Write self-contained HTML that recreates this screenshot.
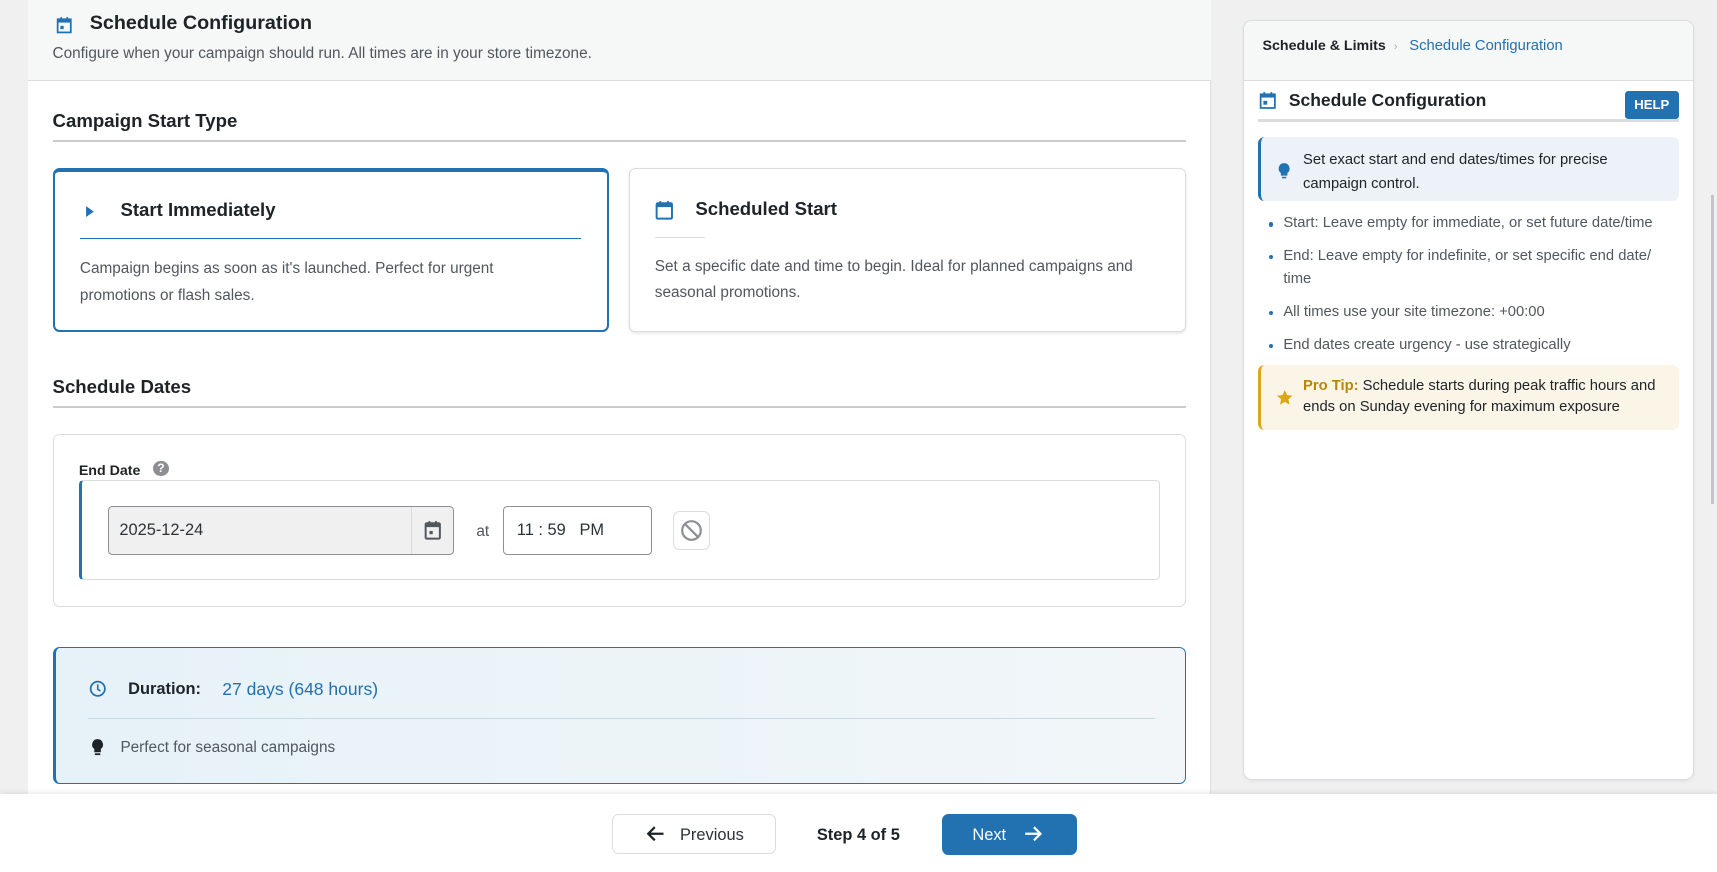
<!DOCTYPE html>
<html><head><meta charset="utf-8"><style>
html{zoom:1.095}
*{box-sizing:border-box;margin:0;padding:0}
body{width:1568px;height:796px;overflow:hidden;background:#f0f0f1;font-family:"Liberation Sans",sans-serif;color:#1d2327;position:relative}
.abs{position:absolute}
.main{left:26px;top:-2px;width:1080px;height:740px;background:#fff;border-right:1px solid #ddd}
.mh{left:0;top:0;width:1080px;height:76px;background:#f6f7f7;border-bottom:1px solid #dcdcde}
.t{white-space:nowrap}
.gray{color:#50575e}
.blue{color:#2271b1}
.card{border-radius:6px;background:#fff}
.li{position:relative;margin-bottom:9px}
.li:before{content:"";position:absolute;left:-13px;top:9px;width:4px;height:4px;border-radius:50%;background:#2271b1}
</style></head><body>
<div class="abs main">
  <div class="abs mh"></div>
</div>
<svg class="abs" style="left:51px;top:15px" width="15" height="16" viewBox="0 0 15 16"><rect x="1.5" y="3" width="12" height="12" fill="none" stroke="#2271b1" stroke-width="1.6"/><rect x="1.5" y="3" width="12" height="3" fill="#2271b1"/><rect x="4" y="1" width="1.6" height="3" fill="#2271b1"/><rect x="9.5" y="1" width="1.6" height="3" fill="#2271b1"/><rect x="4" y="9" width="3" height="3" fill="#2271b1"/></svg>
<div class="abs t" style="left:82px;top:11px;font-size:18px;font-weight:bold">Schedule Configuration</div>
<div class="abs t gray" style="left:48px;top:41px;font-size:14px">Configure when your campaign should run. All times are in your store timezone.</div>

<div class="abs t" style="left:48px;top:100px;font-size:17px;font-weight:bold">Campaign Start Type</div>
<div class="abs" style="left:48px;top:128px;width:1035px;height:2px;background:#ccc"></div>

<div class="abs card" style="left:48px;top:153px;width:508px;height:150px;border:2px solid #2271b1;border-top-width:4px"></div>
<svg class="abs" style="left:78px;top:187px" width="10" height="12"><path d="M1 1 L8 6 L1 11Z" fill="#2271b1"/></svg>
<div class="abs t" style="left:110px;top:182px;font-size:17px;font-weight:bold">Start Immediately</div>
<div class="abs" style="left:73px;top:217px;width:458px;height:1px;background:#2271b1"></div>
<div class="abs gray" style="left:73px;top:234px;width:430px;font-size:14px;line-height:24px">Campaign begins as soon as it's launched. Perfect for urgent promotions or flash sales.</div>

<div class="abs card" style="left:574px;top:153px;width:509px;height:150px;border:1px solid #dcdcde;box-shadow:0 1px 3px rgba(0,0,0,.1)"></div>
<svg class="abs" style="left:598px;top:183px" width="17" height="18" viewBox="0 0 17 18"><rect x="1.5" y="3" width="14" height="14" rx="1" fill="none" stroke="#2271b1" stroke-width="1.8"/><rect x="1.5" y="3" width="14" height="3.5" fill="#2271b1"/><rect x="4" y="1" width="1.8" height="3" fill="#2271b1"/><rect x="11" y="1" width="1.8" height="3" fill="#2271b1"/></svg>
<div class="abs t" style="left:635px;top:181px;font-size:17px;font-weight:bold">Scheduled Start</div>
<div class="abs" style="left:598px;top:216px;width:46px;height:1px;background:#dcdcde"></div>
<div class="abs gray" style="left:598px;top:232px;width:470px;font-size:14px;line-height:24px">Set a specific date and time to begin. Ideal for planned campaigns and seasonal promotions.</div>

<div class="abs t" style="left:48px;top:343px;font-size:17px;font-weight:bold">Schedule Dates</div>
<div class="abs" style="left:48px;top:371px;width:1035px;height:2px;background:#ccc"></div>

<div class="abs card" style="left:48px;top:396px;width:1035px;height:158px;border:1px solid #dcdcde"></div>
<div class="abs t" style="left:72px;top:423px;font-size:13px;font-weight:bold">End Date</div>
<div class="abs" style="left:140px;top:421px;width:14px;height:14px;border-radius:50%;background:#8c8f94;color:#fff;font-size:11px;font-weight:bold;text-align:center;line-height:14px">?</div>
<div class="abs" style="left:72px;top:438px;width:987px;height:92px;border:1px solid #dcdcde;border-left:3px solid #2271b1;border-radius:4px"></div>
<div class="abs" style="left:99px;top:462px;width:316px;height:45px;background:#f0f0f1;border:1px solid #8c8f94;border-radius:4px"></div>
<div class="abs" style="left:375px;top:463px;width:1px;height:43px;background:#dcdcde"></div>
<div class="abs t" style="left:109px;top:476px;font-size:15px;color:#2c3338">2025-12-24</div>
<svg class="abs" style="left:387px;top:475px" width="16" height="18" viewBox="0 0 16 18"><rect x="1.5" y="3" width="13" height="14" rx="1" fill="none" stroke="#50575e" stroke-width="1.8"/><rect x="1.5" y="3" width="13" height="3.5" fill="#50575e"/><rect x="4" y="1" width="1.8" height="3" fill="#50575e"/><rect x="10" y="1" width="1.8" height="3" fill="#50575e"/><rect x="5" y="10" width="3" height="3" fill="#50575e"/></svg>
<div class="abs t gray" style="left:435px;top:478px;font-size:14px">at</div>
<div class="abs" style="left:459px;top:462px;width:136px;height:45px;background:#fff;border:1px solid #8c8f94;border-radius:4px"></div>
<div class="abs t" style="left:472px;top:476px;font-size:15px;color:#2c3338">11 : 59&nbsp;&nbsp; PM</div>
<div class="abs" style="left:615px;top:467px;width:33px;height:35px;border:1px solid #dcdcde;border-radius:6px"></div>
<svg class="abs" style="left:621px;top:474px" width="21" height="21" viewBox="0 0 21 21"><circle cx="10.5" cy="10.5" r="8.5" fill="none" stroke="#8c8f94" stroke-width="2"/><path d="M4.5 4.5 L16.5 16.5" stroke="#8c8f94" stroke-width="2"/></svg>

<div class="abs" style="left:48px;top:591px;width:1035px;height:125px;border:1px solid #2271b1;border-left:3px solid #2271b1;border-radius:6px;background:linear-gradient(90deg,#e6f2f8,#f2f6f9)"></div>
<svg class="abs" style="left:81px;top:621px" width="16" height="16" viewBox="0 0 16 16"><circle cx="8" cy="8" r="6.5" fill="none" stroke="#2271b1" stroke-width="1.6"/><path d="M8 4v4.5l2.5 1.5" fill="none" stroke="#2271b1" stroke-width="1.5"/></svg>
<div class="abs t" style="left:117px;top:621px;font-size:15px;font-weight:bold">Duration:</div>
<div class="abs t blue" style="left:203px;top:620px;font-size:16px">27 days (648 hours)</div>
<div class="abs" style="left:80px;top:656px;width:975px;height:1px;background:#c5d9e6"></div>
<svg class="abs" style="left:83px;top:674px" width="12" height="17" viewBox="0 0 12 17"><path d="M6 1a5 5 0 0 0-3 9v3h6v-3a5 5 0 0 0-3-9z" fill="#1d2327"/><rect x="3.5" y="14" width="5" height="1.6" fill="#1d2327"/></svg>
<div class="abs t gray" style="left:110px;top:675px;font-size:14px">Perfect for seasonal campaigns</div>

<div class="abs" style="left:0;top:725px;width:1568px;height:71px;background:#fff;box-shadow:0 -2px 4px rgba(0,0,0,.08)"></div>
<div class="abs" style="left:559px;top:743px;width:150px;height:37px;border:1px solid #dcdcde;border-radius:6px;background:#fff"></div>
<svg class="abs" style="left:590px;top:753px" width="18" height="16" viewBox="0 0 18 16"><path d="M16 8H3M8 2L2 8l6 6" fill="none" stroke="#1d2327" stroke-width="2"/></svg>
<div class="abs t" style="left:621px;top:754px;font-size:15px;color:#2c3338">Previous</div>
<div class="abs t" style="left:746px;top:754px;font-size:15px;font-weight:bold">Step 4 of 5</div>
<div class="abs" style="left:860px;top:743px;width:124px;height:38px;border-radius:6px;background:#2271b1"></div>
<div class="abs t" style="left:888px;top:754px;font-size:15px;color:#fff">Next</div>
<svg class="abs" style="left:934px;top:753px" width="18" height="16" viewBox="0 0 18 16"><path d="M2 8h13M10 2l6 6-6 6" fill="none" stroke="#fff" stroke-width="2"/></svg>

<div class="abs" style="left:1135px;top:18px;width:412px;height:694px;background:#fff;border:1px solid #dcdcde;border-radius:8px;overflow:hidden;box-shadow:0 1px 3px rgba(0,0,0,.06)">
  <div style="height:55px;background:#f6f7f7;border-bottom:1px solid #dcdcde"></div>
</div>
<div class="abs t" style="left:1153px;top:35px;font-size:13px;font-weight:bold">Schedule &amp; Limits</div>
<div class="abs t" style="left:1273px;top:37px;font-size:10px;color:#a7aaad">›</div>
<div class="abs t blue" style="left:1287px;top:35px;font-size:13.5px">Schedule Configuration</div>
<svg class="abs" style="left:1150px;top:83px" width="16" height="17" viewBox="0 0 16 17"><rect x="1.5" y="3" width="13" height="12.5" fill="none" stroke="#2271b1" stroke-width="1.6"/><rect x="1.5" y="3" width="13" height="3" fill="#2271b1"/><rect x="4" y="1" width="1.6" height="3" fill="#2271b1"/><rect x="10.5" y="1" width="1.6" height="3" fill="#2271b1"/><rect x="4" y="9" width="3.5" height="3.5" fill="#2271b1"/></svg>
<div class="abs t" style="left:1177px;top:82px;font-size:16px;font-weight:bold">Schedule Configuration</div>
<div class="abs" style="left:1484px;top:83px;width:49px;height:26px;background:#2271b1;border-radius:3px;color:#fff;font-size:12px;font-weight:bold;text-align:center;line-height:26px">HELP</div>
<div class="abs" style="left:1149px;top:109px;width:384px;height:2px;background:#dcdcde"></div>

<div class="abs" style="left:1149px;top:125px;width:384px;height:59px;background:#edf2f9;border-left:3px solid #2271b1;border-radius:6px"></div>
<svg class="abs" style="left:1166px;top:148px" width="13" height="17" viewBox="0 0 13 17"><path d="M6.5 1a5 5 0 0 0-3 9v2.5h6V10a5 5 0 0 0-3-9z" fill="#2271b1"/><rect x="4.5" y="13.5" width="4" height="1.4" fill="#2271b1"/></svg>
<div class="abs" style="left:1190px;top:135px;width:330px;font-size:13.5px;line-height:22px">Set exact start and end dates/times for precise campaign control.</div>

<div class="abs gray" style="left:1172px;top:194px;width:360px;font-size:13.5px;line-height:21px">
<div class="li">Start: Leave empty for immediate, or set future date/time</div>
<div class="li">End: Leave empty for indefinite, or set specific end date/ time</div>
<div class="li">All times use your site timezone: +00:00</div>
<div class="li">End dates create urgency - use strategically</div>
</div>

<div class="abs" style="left:1149px;top:333px;width:384px;height:60px;background:#fbf5e8;border-left:3px solid #dba617;border-radius:6px"></div>
<svg class="abs" style="left:1165px;top:355px" width="16" height="16" viewBox="0 0 16 16"><path d="M8 1l2.1 4.6 5 .5-3.8 3.3 1.1 4.9L8 11.8 3.6 14.3l1.1-4.9L.9 6.1l5-.5z" fill="#dba617"/></svg>
<div class="abs" style="left:1190px;top:343px;width:335px;font-size:13.5px;line-height:20px"><b style="color:#b8860b">Pro Tip:</b> Schedule starts during peak traffic hours and ends on Sunday evening for maximum exposure</div>

<div class="abs" style="left:1563px;top:178px;width:2px;height:282px;background:#c3c4c7"></div>
</body></html>
